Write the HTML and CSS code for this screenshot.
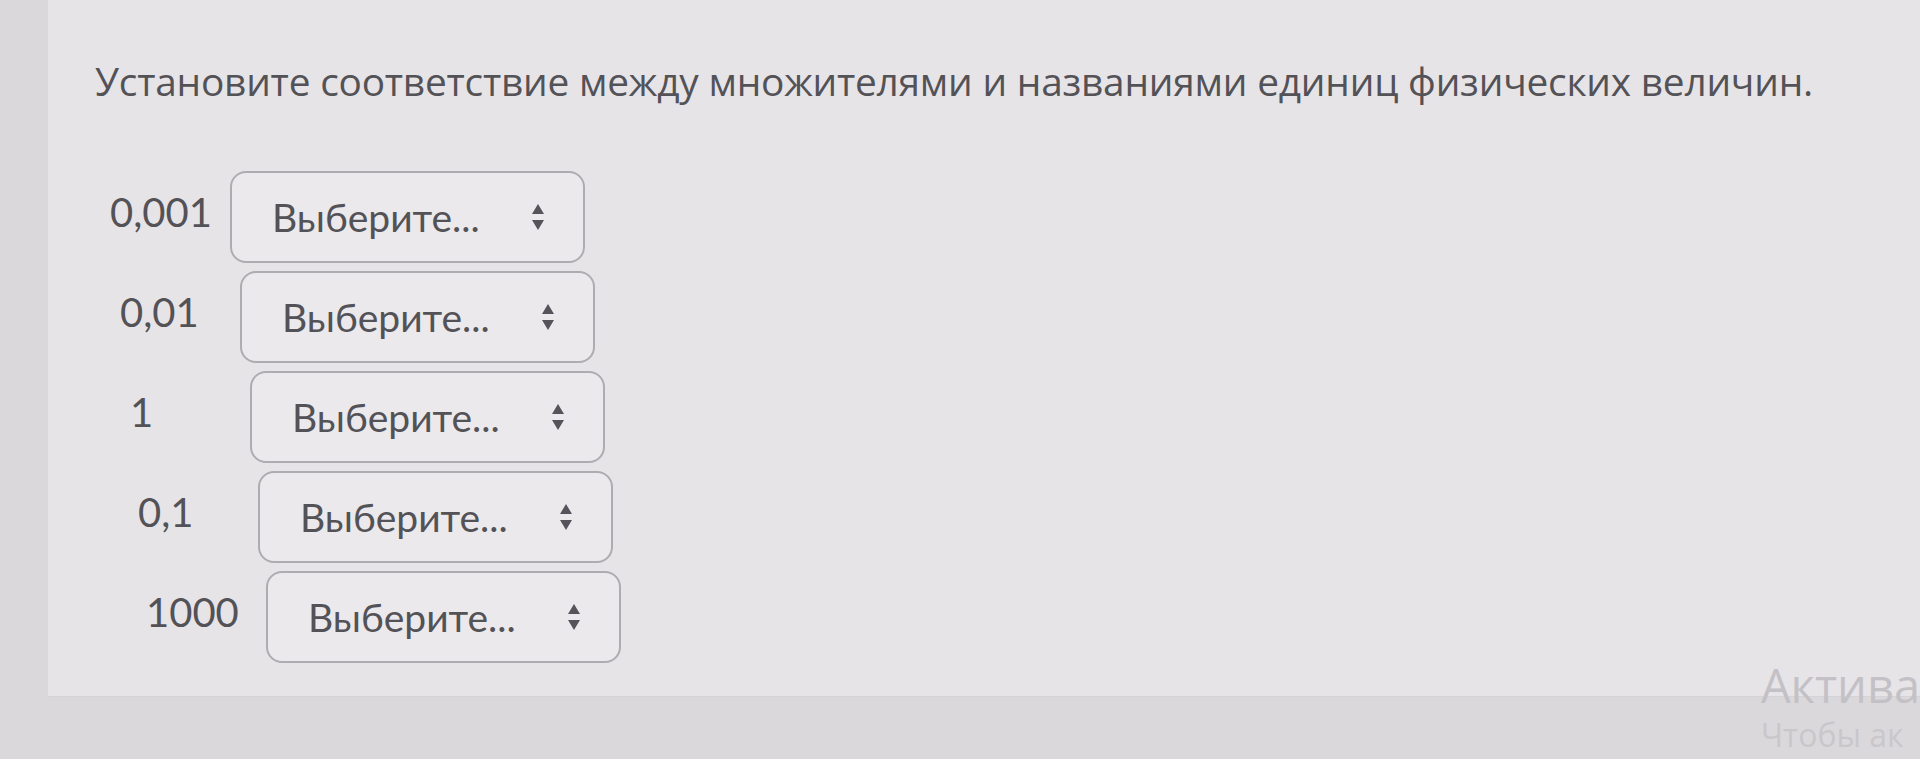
FILE: index.html
```html
<!DOCTYPE html>
<html lang="ru">
<head>
  <meta charset="UTF-8" />
  <meta name="viewport" content="width=device-width, initial-scale=1.0" />
  <title>Вопрос</title>
  <link rel="stylesheet" href="styles.css">
</head>
<body>

  <div class="panel">
    <h2 class="qtext">Установите соответствие между множителями и названиями единиц физических величин.</h2>

    <div class="answers">
      <div class="row">
        <div class="label">0,001</div>
        <div class="select"><span>Выберите...</span>
          <svg class="arrows" viewBox="0 0 14 28"><path d="M7 1 L13 11 L1 11 Z M1 17 L13 17 L7 27 Z" /></svg>
        </div>
      </div>
      <div class="row">
        <div class="label">0,01</div>
        <div class="select"><span>Выберите...</span>
          <svg class="arrows" viewBox="0 0 14 28"><path d="M7 1 L13 11 L1 11 Z M1 17 L13 17 L7 27 Z" /></svg>
        </div>
      </div>
      <div class="row">
        <div class="label">1</div>
        <div class="select"><span>Выберите...</span>
          <svg class="arrows" viewBox="0 0 14 28"><path d="M7 1 L13 11 L1 11 Z M1 17 L13 17 L7 27 Z" /></svg>
        </div>
      </div>
      <div class="row">
        <div class="label">0,1</div>
        <div class="select"><span>Выберите...</span>
          <svg class="arrows" viewBox="0 0 14 28"><path d="M7 1 L13 11 L1 11 Z M1 17 L13 17 L7 27 Z" /></svg>
        </div>
      </div>
      <div class="row">
        <div class="label">1000</div>
        <div class="select"><span>Выберите...</span>
          <svg class="arrows" viewBox="0 0 14 28"><path d="M7 1 L13 11 L1 11 Z M1 17 L13 17 L7 27 Z" /></svg>
        </div>
      </div>
    </div>
  </div>

  <!-- водяной знак Windows, обрезан краем экрана -->
  <div class="watermark">
    <div class="wm-title">Актива</div>
    <div class="wm-sub">Чтобы ак</div>
  </div>

</body>
</html>
```

FILE: styles.css
```css
:root {
  --text-color: #535257;
  --panel-bg: #e7e4e8;
  --page-bg: #dbd8db;
}
html, body {
  margin: 0;
  height: 100%;
  overflow: hidden;
}
body {
  background: var(--page-bg);
  font-family: Lato, "Open Sans", sans-serif;
  color: var(--text-color);
  position: relative;
}
.panel {
  margin-left: 48px;
  height: 697px;
  box-sizing: border-box;
  padding: 53px 0 0 47px;
  background: var(--panel-bg);
  border-bottom: 1px solid #d6d3d7;
}
.qtext {
  margin: 0;
  font-family: "Open Sans", sans-serif;
  font-weight: 400;
  font-size: 38.8px;
  line-height: 57px;
  letter-spacing: -0.2px;
  color: var(--text-color);
  white-space: nowrap;
}
.answers {
  margin-top: 61px;
  padding-left: 15px;
  display: flex;
  flex-direction: column;
  gap: 8px;
}
.row {
  display: grid;
  grid-template-columns: 120px 355px;
  height: 92px;
}
.row:nth-child(2) { margin-left: 10px; }
.row:nth-child(3) { margin-left: 20px; }
.row:nth-child(4) { margin-left: 28px; }
.row:nth-child(5) { margin-left: 36px; }
.label {
  font-size: 40px;
  line-height: 48px;
  padding-top: 17px;
}
.select {
  display: flex;
  align-items: center;
  justify-content: space-between;
  padding: 0 38px 0 40px;
  border: 2px solid #aeacb0;
  border-radius: 16px;
  background: #ebe9ec;
  font-size: 39px;
}
.arrows {
  width: 14px;
  height: 28px;
  fill: #55545a;
}
.watermark {
  position: absolute;
  right: 0;
  top: 656px;
  font-family: "Open Sans", sans-serif;
  color: #c4c1c6;
  white-space: nowrap;
}
.wm-title {
  font-size: 47px;
  line-height: 58px;
}
.wm-sub {
  font-size: 32px;
  line-height: 42px;
  color: #cac7cb;
}
```
